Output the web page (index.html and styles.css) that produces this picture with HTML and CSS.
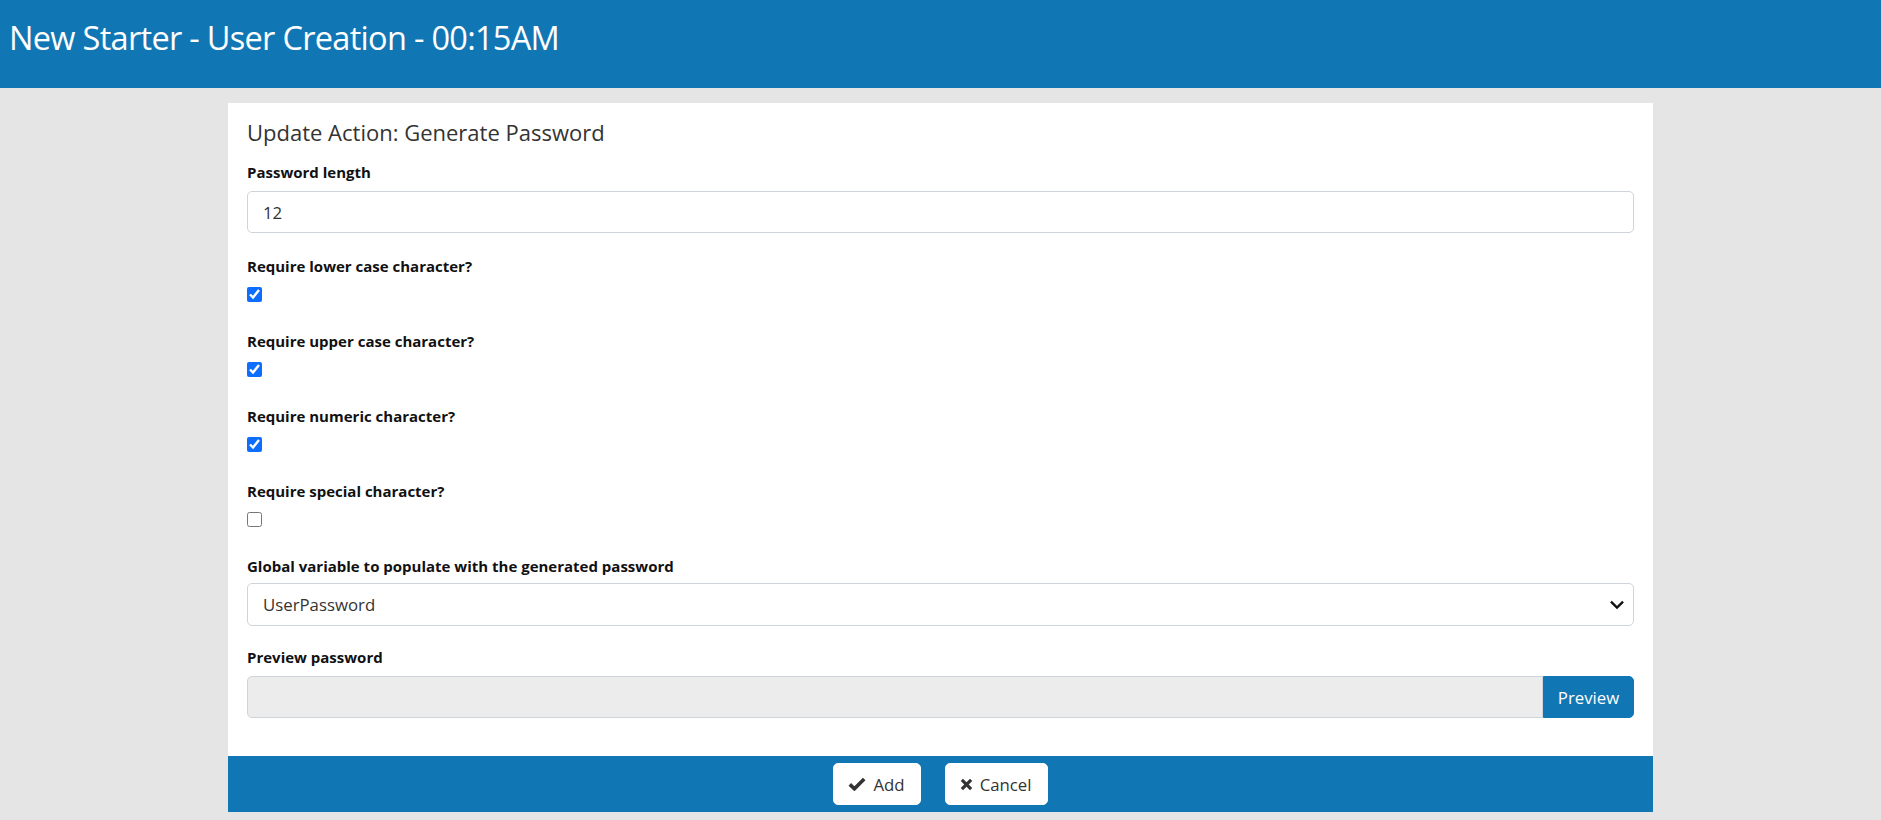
FILE: index.html
```html
<!DOCTYPE html>
<html lang="en">

<head>
    <meta charset="UTF-8">
    <meta name="viewport" content="width=device-width, initial-scale=1.0">
    <title>New Starter - User Creation</title>
    <link rel="stylesheet" href="styles.css">
</head>

<body>
    <header class="topbar">
        <h1>New Starter - User Creation - 00:15AM</h1>
    </header>

    <main class="content">
        <div class="card">
            <div class="card-body">
                <h5 class="card-title">Update Action: Generate Password</h5>

                <div class="field">
                    <label for="pwLength">Password length</label>
                    <input id="pwLength" class="form-control" type="text" value="12">
                </div>

                <div class="field field-check">
                    <label for="reqLower">Require lower case character?</label>
                    <input id="reqLower" class="check" type="checkbox" checked>
                </div>

                <div class="field field-check">
                    <label for="reqUpper">Require upper case character?</label>
                    <input id="reqUpper" class="check" type="checkbox" checked>
                </div>

                <div class="field field-check">
                    <label for="reqNumeric">Require numeric character?</label>
                    <input id="reqNumeric" class="check" type="checkbox" checked>
                </div>

                <div class="field field-check">
                    <label for="reqSpecial">Require special character?</label>
                    <input id="reqSpecial" class="check" type="checkbox">
                </div>

                <div class="field field-select">
                    <label for="globalVar">Global variable to populate with the generated password</label>
                    <div class="select-wrap">
                        <select id="globalVar" class="form-control form-select">
                            <option>UserPassword</option>
                        </select>
                        <svg class="select-arrow" viewBox="0 0 16 16" width="14" height="14">
                            <path d="M2 5l6 6 6-6" fill="none" stroke="#111" stroke-width="2.6" stroke-linecap="square"/>
                        </svg>
                    </div>
                </div>

                <div class="field field-last">
                    <label for="preview">Preview password</label>
                    <div class="input-group">
                        <input id="preview" class="form-control" type="text" disabled>
                        <button class="btn btn-primary" type="button">Preview</button>
                    </div>
                </div>
            </div>

            <div class="card-footer">
                <button class="btn btn-light" type="button">
                    <svg viewBox="0 0 18 14" width="18" height="14">
                        <path d="M1.8 7.4l4.6 4.4L16.2 2" fill="none" stroke="#333" stroke-width="3.6" stroke-linejoin="miter"/>
                    </svg>
                    Add
                </button>
                <button class="btn btn-light" type="button">
                    <svg viewBox="0 0 14 14" width="13" height="13">
                        <path d="M2 2l10 10M12 2L2 12" fill="none" stroke="#333" stroke-width="3.4"/>
                    </svg>
                    Cancel
                </button>
            </div>
        </div>
    </main>
</body>

</html>
```

FILE: styles.css
```css
*,
*:before,
*:after {
    box-sizing: border-box;
    margin: 0;
    padding: 0;
}

html,
body {
    width: 100%;
    height: 100%;
    overflow: hidden;
}

body {
    background: #e5e5e5;
    font-family: "Open Sans", "Noto Sans", sans-serif;
    font-size: 16.8px;
    line-height: 1.5;
    color: #212529;
}

.topbar {
    height: 88px;
    padding: 18px 0 0 9px;
    background: #1177b4;
    color: #fff;
}

.topbar h1 {
    font-weight: 400;
    font-size: 32.5px;
    line-height: 1.2;
    letter-spacing: -0.7px;
}

.content {
    display: flex;
    justify-content: center;
    padding-top: 15px;
}

.card {
    width: 1425px;
    background: #fff;
}

.card-body {
    padding: 16px 19px 38px;
}

.card-title {
    font-size: 22px;
    font-weight: 500;
    line-height: 1.2;
    color: #333;
    margin-bottom: 15px;
}

.field {
    display: flex;
    flex-direction: column;
    align-items: flex-start;
    margin-bottom: 21px;
}

.field-check {
    margin-bottom: 27px;
}

.field-select {
    margin-bottom: 19px;
}

.field-last {
    margin-bottom: 0;
}

.field label {
    display: block;
    font-weight: 700;
    font-size: 15px;
    line-height: 25px;
    color: #111;
    margin-bottom: 6px;
}

.field-check label {
    margin-bottom: 8px;
}

.field-select label {
    margin-bottom: 4px;
}

.form-control {
    display: block;
    width: 100%;
    height: 42px;
    padding: 0 15px;
    font-family: inherit;
    font-size: 16.8px;
    color: #333;
    background: #fff;
    border: 1px solid #ced4da;
    border-radius: 5px;
    outline: none;
}

.select-wrap {
    position: relative;
    width: 100%;
}

.form-select {
    height: 43px;
    appearance: none;
    -webkit-appearance: none;
}

.select-arrow {
    position: absolute;
    top: 15px;
    right: 10px;
    pointer-events: none;
}

.check {
    width: 15px;
    height: 15px;
    margin: 0;
    accent-color: #0d6efd;
}

.input-group {
    display: flex;
    width: 100%;
}

.input-group .form-control {
    flex: 1;
    background: #ececec;
    border-radius: 5px 0 0 5px;
}

.btn {
    display: inline-flex;
    align-items: center;
    gap: 7px;
    height: 42px;
    font-family: inherit;
    font-size: 16.8px;
    border: 1px solid transparent;
    border-radius: 5px;
    cursor: pointer;
}

.btn-primary {
    width: 91px;
    justify-content: center;
    background: #1177b4;
    color: #fff;
    border-color: #1177b4;
    border-radius: 0 5px 5px 0;
}

.card-footer {
    display: flex;
    justify-content: center;
    gap: 24px;
    padding: 7px 0;
    background: #1177b4;
}

.btn-light {
    padding: 0 15px 0 14px;
    background: #fff;
    color: #333;
    border-color: #fff;
}
```
